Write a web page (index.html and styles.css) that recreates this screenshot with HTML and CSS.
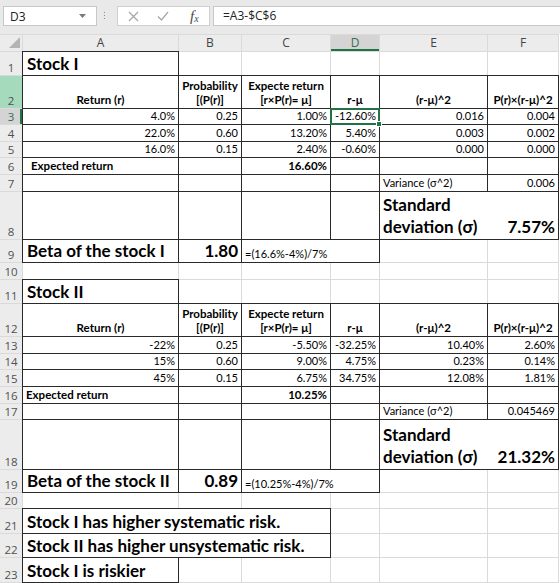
FILE: index.html
```html
<!DOCTYPE html>
<html lang="en">
<head>
    <meta charset="UTF-8">
    <meta name="viewport" content="width=device-width, initial-scale=1.0">
    <title>Stock risk - Book1</title>
    <link rel="stylesheet" href="styles.css">
</head>
<body>
    <!-- name box + formula bar -->
    <div class="ribbon">
        <div class="namebox">
            <span>D3</span>
            <svg class="caret" width="7" height="4" viewBox="0 0 7 4"><path d="M0 0h7L3.5 4z" fill="#7a7a7a"/></svg>
        </div>
        <div class="grip"><i></i><i></i><i></i></div>
        <div class="fx-tools">
            <svg class="tool-x" width="11" height="11" viewBox="0 0 11 11"><path d="M1 1l9 9M10 1l-9 9" stroke="#a8a8a8" stroke-width="1.3" fill="none"/></svg>
            <svg class="tool-ok" width="12" height="10" viewBox="0 0 12 10"><path d="M1 5.5l3.5 3.5L11 1" stroke="#a8a8a8" stroke-width="1.3" fill="none"/></svg>
            <span class="fx">f<sub>x</sub></span>
        </div>
        <div class="formula">=A3-$C$6</div>
    </div>

    <table class="sheet">
        <colgroup>
            <col class="w-rh"><col class="w-a"><col class="w-b"><col class="w-c"><col class="w-d"><col class="w-e"><col class="w-f">
        </colgroup>
        <tr class="h16 colhead">
            <th class="corner"><svg width="11" height="11" viewBox="0 0 11 11"><path d="M11 0v11H0z" fill="#b4b4b4"/></svg></th>
            <th>A</th><th>B</th><th>C</th><th class="on">D</th><th>E</th><th>F</th>
        </tr>

        <!-- Stock I -->
        <tr class="h23"><th>1</th><td class="b big">Stock I</td><td></td><td></td><td></td><td></td><td></td></tr>
        <tr class="h32"><th class="rh-hl">2</th><td class="b hd">Return (r)</td><td class="b hd">Probability<br>[(P(r)]</td><td class="b hd">Expecte return<br>[r×P(r)= μ]</td><td class="b hd">r-μ</td><td class="b hd">(r-μ)^2</td><td class="b hd">P(r)×(r-μ)^2</td></tr>
        <tr class="h15"><th class="rh-sel">3</th><td class="b r">4.0%</td><td class="b r">0.25</td><td class="b r">1.00%</td><td class="b r sel">-12.60%</td><td class="b r">0.016</td><td class="b r">0.004</td></tr>
        <tr class="h16"><th>4</th><td class="b r">22.0%</td><td class="b r">0.60</td><td class="b r">13.20%</td><td class="b r">5.40%</td><td class="b r">0.003</td><td class="b r">0.002</td></tr>
        <tr class="h15"><th>5</th><td class="b r">16.0%</td><td class="b r">0.15</td><td class="b r">2.40%</td><td class="b r">-0.60%</td><td class="b r">0.000</td><td class="b r">0.000</td></tr>
        <tr class="h16"><th>6</th><td class="b bold ind">Expected return</td><td class="b"></td><td class="b r bold">16.60%</td><td class="b"></td><td class="b"></td><td class="b"></td></tr>
        <tr class="h16"><th>7</th><td class="b"></td><td class="b"></td><td class="b"></td><td class="b"></td><td class="b">Variance (σ^2)</td><td class="b r">0.006</td></tr>
        <tr class="h47"><th>8</th><td class="b"></td><td class="b"></td><td class="b"></td><td class="b"></td>
            <td class="b" colspan="2"><div class="sd"><span class="big">Standard<br>deviation (σ)</span><span class="big">7.57%</span></div></td></tr>
        <tr class="h22"><th>9</th><td class="b big">Beta of the stock I</td><td class="b big r">1.80</td><td class="b note" colspan="2">=(16.6%-4%)/7%</td><td></td><td></td></tr>
        <tr class="h16"><th>10</th><td></td><td></td><td></td><td></td><td></td><td></td></tr>

        <!-- Stock II -->
        <tr class="h23"><th>11</th><td class="b big">Stock II</td><td></td><td></td><td></td><td></td><td></td></tr>
        <tr class="h32"><th>12</th><td class="b hd">Return (r)</td><td class="b hd">Probability<br>[(P(r)]</td><td class="b hd">Expecte return<br>[r×P(r)= μ]</td><td class="b hd">r-μ</td><td class="b hd">(r-μ)^2</td><td class="b hd">P(r)×(r-μ)^2</td></tr>
        <tr class="h16"><th>13</th><td class="b r">-22%</td><td class="b r">0.25</td><td class="b r">-5.50%</td><td class="b r">-32.25%</td><td class="b r">10.40%</td><td class="b r">2.60%</td></tr>
        <tr class="h15"><th>14</th><td class="b r">15%</td><td class="b r">0.60</td><td class="b r">9.00%</td><td class="b r">4.75%</td><td class="b r">0.23%</td><td class="b r">0.14%</td></tr>
        <tr class="h16"><th>15</th><td class="b r">45%</td><td class="b r">0.15</td><td class="b r">6.75%</td><td class="b r">34.75%</td><td class="b r">12.08%</td><td class="b r">1.81%</td></tr>
        <tr class="h16"><th>16</th><td class="b bold">Expected return</td><td class="b"></td><td class="b r bold">10.25%</td><td class="b"></td><td class="b"></td><td class="b"></td></tr>
        <tr class="h15"><th>17</th><td class="b"></td><td class="b"></td><td class="b"></td><td class="b"></td><td class="b">Variance (σ^2)</td><td class="b r">0.045469</td></tr>
        <tr class="h49"><th>18</th><td class="b"></td><td class="b"></td><td class="b"></td><td class="b"></td>
            <td class="b" colspan="2"><div class="sd"><span class="big">Standard<br>deviation (σ)</span><span class="big">21.32%</span></div></td></tr>
        <tr class="h22"><th>19</th><td class="b big">Beta of the stock II</td><td class="b big r">0.89</td><td class="b note" colspan="2">=(10.25%-4%)/7%</td><td></td><td></td></tr>
        <tr class="h15"><th>20</th><td></td><td></td><td></td><td></td><td></td><td></td></tr>

        <!-- conclusions -->
        <tr class="h24"><th>21</th><td class="b big" colspan="3">Stock I has higher systematic risk.</td><td></td><td></td><td></td></tr>
        <tr class="h23"><th>22</th><td class="b big" colspan="3">Stock II has higher unsystematic risk.</td><td></td><td></td><td></td></tr>
        <tr class="h24"><th>23</th><td class="b big">Stock I is riskier</td><td></td><td></td><td></td><td></td><td></td></tr>
        <tr class="h16"><th></th><td></td><td></td><td></td><td></td><td></td><td></td></tr>
    </table>
</body>
</html>
```

FILE: styles.css
```css
body {
    margin: 0;
    background: #fff;
    overflow: hidden;
    font-family: Lato, "Open Sans", sans-serif;
}

/* ---- formula bar ---- */
.ribbon {
    display: flex;
    align-items: flex-start;
    height: 34px;
    padding-top: 6px;
    box-sizing: border-box;
    background: #e9e9e9;
    font-family: "Open Sans", sans-serif;
    font-size: 12px;
    color: #222;
}
.namebox {
    display: flex;
    align-items: center;
    justify-content: space-between;
    width: 94px;
    height: 20px;
    margin-left: 3px;
    padding: 0 10px 0 6px;
    box-sizing: border-box;
    background: #fff;
    border: 1px solid #c8c8c8;
}
.grip {
    display: flex;
    flex-direction: column;
    gap: 2px;
    margin: 6px 0 0 7px;
}
.grip i {
    display: block;
    width: 1px;
    height: 1px;
    background: #8a8a8a;
}
.fx-tools {
    display: flex;
    align-items: center;
    width: 93px;
    height: 20px;
    margin-left: 12px;
    box-sizing: border-box;
    background: #fff;
    border: 1px solid #d0d0d0;
}
.tool-x { margin-left: 10px; }
.tool-ok { margin-left: 18px; }
.fx {
    margin-left: 21px;
    font-family: "Liberation Serif", serif;
    font-style: italic;
    font-size: 15px;
    color: #4a4a4a;
    line-height: 1;
}
.fx sub {
    font-size: 10px;
    vertical-align: -1px;
}
.formula {
    flex: 1;
    height: 20px;
    margin-left: 3px;
    padding-left: 9px;
    box-sizing: border-box;
    background: #fff;
    border: 1px solid #c8c8c8;
    border-right: none;
    line-height: 18px;
}

/* ---- the sheet ---- */
.sheet {
    table-layout: fixed;
    width: 560px;
    margin-left: -1px;
    border-collapse: separate;
    border-spacing: 1px;
    background: #dadada;
}
.w-rh { width: 22px; }
.w-a { width: 155px; }
.w-b { width: 62px; }
.w-c { width: 88px; }
.w-d { width: 48px; }
.w-e { width: 107px; }
.w-f { width: 70px; }

.h15 { height: 15px; }
.h16 { height: 16px; }
.h22 { height: 22px; }
.h23 { height: 23px; }
.h24 { height: 24px; }
.h32 { height: 32px; }
.h47 { height: 47px; }
.h49 { height: 49px; }

th {
    padding: 0;
    background: #ececec;
    color: #505050;
    font-family: "Open Sans", sans-serif;
    font-weight: 400;
    font-size: 11.5px;
    line-height: 14px;
    text-align: center;
    vertical-align: bottom;
}
.colhead th {
    font-size: 12px;
    vertical-align: middle;
    color: #444;
}
.colhead .on {
    background: #d4d4d4;
    color: #3a6b52;
    box-shadow: inset 0 -2px 0 #217346;
}
.corner {
    text-align: right;
    vertical-align: bottom;
    padding: 0 2px 2px 0;
}
.corner svg { display: block; margin-left: auto; }
.rh-hl { background: #a6dabd; }
.rh-sel {
    background: #d4d4d4;
    color: #3a6b52;
    box-shadow: inset -2px 0 0 #217346;
}

td {
    padding: 0 3px 1px;
    background: #fff;
    color: #000;
    font-size: 11px;
    line-height: 14px;
    white-space: nowrap;
    vertical-align: bottom;
    overflow: visible;
}
td.b { outline: 1px solid #2a2a2a; }
.r { text-align: right; }
.bold {
    font-weight: 700;
    font-size: 11.5px;
}
.ind { padding-left: 8px; }
.hd {
    font-weight: 700;
    font-size: 11.5px;
    text-align: center;
}
.big {
    font-size: 17px;
    font-weight: 700;
    line-height: 20px;
}
td.big { padding-left: 4px; }
.note { font-size: 11px; }

.sd {
    display: flex;
    justify-content: space-between;
    align-items: flex-end;
}
.sd .big { line-height: 22px; }

/* active cell frame and fill handle */
.sel { position: relative; }
.sel::after {
    content: "";
    position: absolute;
    left: -1px;
    top: -1px;
    right: -1px;
    bottom: -1px;
    border: 2px solid #217346;
    z-index: 1;
}
.sel::before {
    content: "";
    position: absolute;
    right: -3px;
    bottom: -3px;
    width: 4px;
    height: 4px;
    background: #217346;
    border: 1px solid #fff;
    z-index: 2;
}
```
